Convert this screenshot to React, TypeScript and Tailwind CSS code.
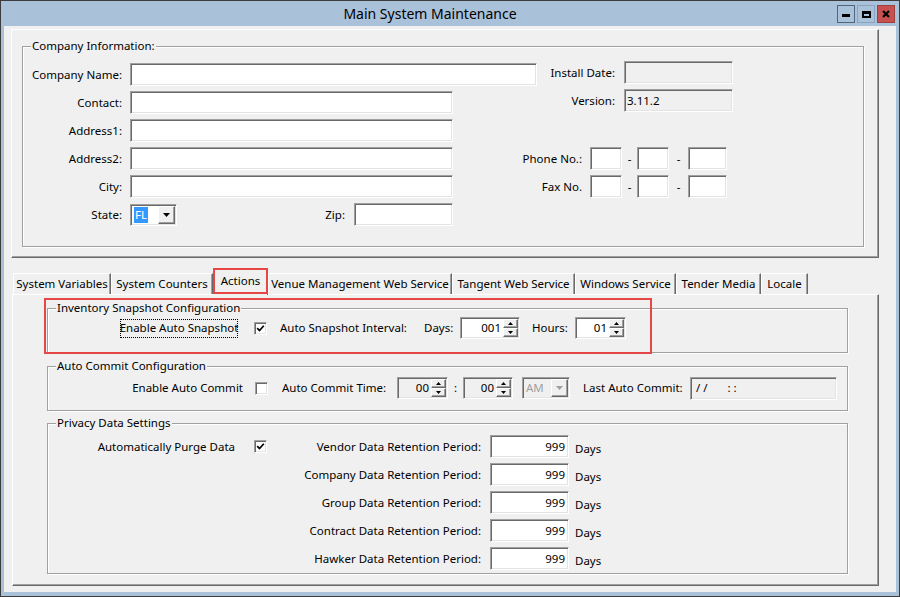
import React from "react";

// classic 3D borders
const sunken =
  "border border-t-[#a0a0a0] border-l-[#a0a0a0] border-b-white border-r-white shadow-[inset_1px_1px_0_#696969,inset_-1px_-1px_0_#e3e3e3]";
const raised =
  "border border-t-white border-l-white border-b-[#696969] border-r-[#696969] shadow-[inset_-1px_-1px_0_#a0a0a0]";

function TextBox({ className = "", value, ro = false, right = false }: { className?: string; value?: React.ReactNode; ro?: boolean; right?: boolean }) {
  return (
    <div
      className={`${sunken} h-[23px] flex items-center whitespace-nowrap ${ro ? "bg-[#f0f0f0]" : "bg-white"} ${right ? "justify-end pr-[3px]" : "pl-[2px]"} ${className}`}
    >
      {value}
    </div>
  );
}

function Tri({ up = false, color = "#000" }: { up?: boolean; color?: string }) {
  return (
    <svg width="5" height="3" viewBox="0 0 5 3">
      <polygon points={up ? "0,3 5,3 2.5,0" : "0,0 5,0 2.5,3"} fill={color} />
    </svg>
  );
}

function Spin({ className = "", value, disabled = false }: { className?: string; value: string; disabled?: boolean }) {
  return (
    <div className={`${sunken} h-[22px] flex ${disabled ? "bg-[#f0f0f0]" : "bg-white"} ${className}`}>
      <div className="flex-1 flex items-center justify-end pr-[2px]">{value}</div>
      <div className="w-[16px] flex flex-col py-[1px] pr-[1px]">
        <div className={`${raised} flex-1 flex items-center justify-center bg-[#f0f0f0]`}>
          <Tri up />
        </div>
        <div className={`${raised} flex-1 flex items-center justify-center bg-[#f0f0f0]`}>
          <Tri />
        </div>
      </div>
    </div>
  );
}

function Combo({ className = "", value, disabled = false, selected = false }: { className?: string; value: string; disabled?: boolean; selected?: boolean }) {
  return (
    <div className={`${sunken} h-[22px] flex ${disabled ? "bg-[#f0f0f0]" : "bg-white"} ${className}`}>
      <div className="flex-1 flex items-center pl-[3px]">
        <span className={selected ? "bg-[#3399ff] text-white px-[1px] leading-[16px]" : disabled ? "text-[#a0a0a0]" : ""}>{value}</span>
      </div>
      <div className={`${raised} m-[1px] w-[17px] flex items-center justify-center bg-[#f0f0f0]`}>
        <svg width="7" height="4" viewBox="0 0 7 4">
          <polygon points="0,0 7,0 3.5,4" fill={disabled ? "#a0a0a0" : "#000"} />
        </svg>
      </div>
    </div>
  );
}

function Check({ checked = false }: { checked?: boolean }) {
  return (
    <div className={`${sunken} w-[13px] h-[13px] bg-white flex items-center justify-center shrink-0`}>
      {checked && (
        <svg width="9" height="9" viewBox="0 0 9 9">
          <path d="M1.2 4.2 L3.5 6.6 L7.8 1.8" stroke="#000" strokeWidth="1.7" fill="none" />
        </svg>
      )}
    </div>
  );
}

function GroupBox({ title, className = "", children }: { title: string; className?: string; children?: React.ReactNode }) {
  return (
    <div className={`relative border border-[#a0a0a0] shadow-[inset_1px_1px_0_#fff,1px_1px_0_#fff] ${className}`}>
      <span className="absolute -top-[9px] left-[8px] bg-[#f0f0f0] px-[1px] leading-[16px] whitespace-nowrap">{title}</span>
      {children}
    </div>
  );
}

function Row({ label, children }: { label: string; children: React.ReactNode }) {
  return (
    <div className="flex items-center h-[23px]">
      <div className="w-[99px] text-right whitespace-nowrap">{label}</div>
      <div className="ml-[8px]">{children}</div>
    </div>
  );
}

const tabs = [
  { name: "System Variables", w: "w-[98px]" },
  { name: "System Counters", w: "w-[102px]" },
  { name: "Actions", w: "w-[55px]", active: true },
  { name: "Venue Management Web Service", w: "w-[184px]" },
  { name: "Tangent Web Service", w: "w-[123px]" },
  { name: "Windows Service", w: "w-[101px]" },
  { name: "Tender Media", w: "w-[85px]" },
  { name: "Locale", w: "w-[47px]" },
];

const retention = ["Vendor", "Company", "Group", "Contract", "Hawker"];

export default function App() {
  return (
    <div className="w-[900px] h-[597px] bg-[#aac1da] border border-[#3c3c3c] flex flex-col font-['Noto_Sans',sans-serif] text-[11.5px] text-black">
      {/* title bar */}
      <div className="h-[25px] flex items-center shrink-0">
        <div className="flex-1 text-center pl-[22px] text-[14px]">Main System Maintenance</div>
        <div className="flex gap-[2px] pr-[4px] pt-[1px]">
          <div className="w-[18px] h-[18px] border border-[#52637a] flex items-center justify-center">
            <div className="w-[8px] h-[3px] bg-black mt-[3px]" />
          </div>
          <div className="w-[18px] h-[18px] border border-[#8aa3c0] flex items-center justify-center">
            <div className="w-[9px] h-[7px] border-2 border-t-[3px] border-black" />
          </div>
          <div className="w-[18px] h-[18px] border border-[#9c4040] bg-[#c75050] flex items-center justify-center">
            <svg width="8" height="8" viewBox="0 0 8 8">
              <path d="M1 1L7 7M7 1L1 7" stroke="#000" strokeWidth="2.2" />
            </svg>
          </div>
        </div>
      </div>

      {/* client area */}
      <div className="mx-[3px] mb-[4px] flex-1 bg-[#f0f0f0] flex flex-col">
        {/* company panel */}
        <div className={`ml-[7px] mt-[3px] w-[868px] h-[229px] ${raised}`}>
          <GroupBox title="Company Information:" className="ml-[10px] mt-[16px] w-[842px] h-[201px]">
            <div className="flex">
              <div className="w-[514px] pt-[16px] flex flex-col gap-[5px]">
                <Row label="Company Name:">
                  <TextBox className="w-[407px]" />
                </Row>
                <Row label="Contact:">
                  <TextBox className="w-[323px]" />
                </Row>
                <Row label="Address1:">
                  <TextBox className="w-[323px]" />
                </Row>
                <Row label="Address2:">
                  <TextBox className="w-[323px]" />
                </Row>
                <Row label="City:">
                  <TextBox className="w-[323px]" />
                </Row>
                <div className="flex items-center h-[23px]">
                  <div className="w-[99px] text-right">State:</div>
                  <Combo className="ml-[8px] w-[47px]" value="FL" selected />
                  <div className="w-[168px] text-right">Zip:</div>
                  <TextBox className="ml-[9px] w-[99px]" />
                </div>
              </div>
              <div className="pt-[14px] flex flex-col">
                <div className="flex items-center h-[23px]">
                  <div className="w-[78px] text-right whitespace-nowrap">Install Date:</div>
                  <TextBox className="ml-[9px] w-[109px]" ro />
                </div>
                <div className="flex items-center h-[23px] mt-[5px]">
                  <div className="w-[78px] text-right">Version:</div>
                  <TextBox className="ml-[9px] w-[109px]" ro value="3.11.2" />
                </div>
                <div className="flex items-center h-[23px] mt-[35px]">
                  <div className="-ml-[40px] w-[85px] text-right whitespace-nowrap">Phone No.:</div>
                  <TextBox className="ml-[8px] w-[32px]" />
                  <div className="w-[15px] text-center">-</div>
                  <TextBox className="w-[32px]" />
                  <div className="w-[19px] text-center">-</div>
                  <TextBox className="w-[39px]" />
                </div>
                <div className="flex items-center h-[23px] mt-[5px]">
                  <div className="-ml-[40px] w-[85px] text-right whitespace-nowrap">Fax No.</div>
                  <TextBox className="ml-[8px] w-[32px]" />
                  <div className="w-[15px] text-center">-</div>
                  <TextBox className="w-[32px]" />
                  <div className="w-[19px] text-center">-</div>
                  <TextBox className="w-[39px]" />
                </div>
              </div>
            </div>
          </GroupBox>
        </div>

        {/* tab strip */}
        <div className="ml-[9px] mt-[10px] h-[26px] flex items-end shrink-0">
          {tabs.map((t) =>
            t.active ? (
              <div
                key={t.name}
                className={`${t.w} h-[27px] -mb-[1px] relative z-10 bg-[#f0f0f0] border-t border-l border-white border-r border-r-[#696969] flex items-center justify-center whitespace-nowrap pb-[2px]`}
              >
                {t.name}
                <div className="absolute -inset-[1px] bottom-[1px] border-2 border-[#e54646]" />
              </div>
            ) : (
              <div
                key={t.name}
                className={`${t.w} h-[21px] border-t border-l border-white border-r border-r-[#696969] shadow-[inset_-1px_0_0_#a0a0a0] flex items-center justify-center whitespace-nowrap`}
              >
                {t.name}
              </div>
            )
          )}
        </div>

        {/* tab panel */}
        <div className={`ml-[8px] w-[867px] h-[292px] relative ${raised}`}>
          <GroupBox title="Inventory Snapshot Configuration" className="ml-[34px] mt-[13px] w-[801px] h-[45px]">
            <div className="flex items-center mt-[8px] h-[22px]">
              <div className="ml-[72px] w-[118px] h-[19px] border border-dotted border-black flex items-center justify-center whitespace-nowrap">
                Enable Auto Snapshot
              </div>
              <div className="ml-[16px]">
                <Check checked />
              </div>
              <div className="ml-[13px] w-[144px] whitespace-nowrap">Auto Snapshot Interval:</div>
              <div className="w-[36px]">Days:</div>
              <Spin className="w-[60px]" value="001" />
              <div className="ml-[12px] w-[43px]">Hours:</div>
              <Spin className="w-[51px]" value="01" />
            </div>
          </GroupBox>

          <GroupBox title="Auto Commit Configuration" className="ml-[34px] mt-[13px] w-[801px] h-[45px]">
            <div className="flex items-center mt-[10px] h-[22px]">
              <div className="w-[195px] text-right whitespace-nowrap">Enable Auto Commit</div>
              <div className="ml-[12px]">
                <Check />
              </div>
              <div className="ml-[14px] w-[115px] whitespace-nowrap">Auto Commit Time:</div>
              <Spin className="w-[51px]" value="00" disabled />
              <div className="w-[15px] text-center">:</div>
              <Spin className="w-[50px]" value="00" disabled />
              <Combo className="ml-[9px] w-[48px]" value="AM" disabled />
              <div className="ml-[13px] w-[107px] whitespace-nowrap">Last Auto Commit:</div>
              <TextBox
                className="w-[147px] pl-[5px]"
                ro
                value={
                  <>
                    <span>/ /</span>
                    <span className="ml-[20px]">: :</span>
                  </>
                }
              />
            </div>
          </GroupBox>

          <GroupBox title="Privacy Data Settings" className="ml-[34px] mt-[12px] w-[801px] h-[151px]">
            <div className="flex flex-col gap-[5px] pt-[11px]">
              {retention.map((r, i) => (
                <div key={r} className="flex items-center h-[23px]">
                  <div className="w-[234px] flex items-center">
                    {i === 0 && (
                      <>
                        <div className="w-[187px] text-right whitespace-nowrap">Automatically Purge Data</div>
                        <div className="ml-[19px]">
                          <Check checked />
                        </div>
                      </>
                    )}
                  </div>
                  <div className="w-[199px] text-right whitespace-nowrap">{r} Data Retention Period:</div>
                  <TextBox className="ml-[9px] w-[79px]" right value="999" />
                  <div className="ml-[6px] mt-[4px]">Days</div>
                </div>
              ))}
            </div>
          </GroupBox>

          {/* red highlight annotation */}
          <div className="absolute left-[31px] top-[3px] w-[608px] h-[56px] border-2 border-[#e54646]" />
        </div>
      </div>
    </div>
  );
}
